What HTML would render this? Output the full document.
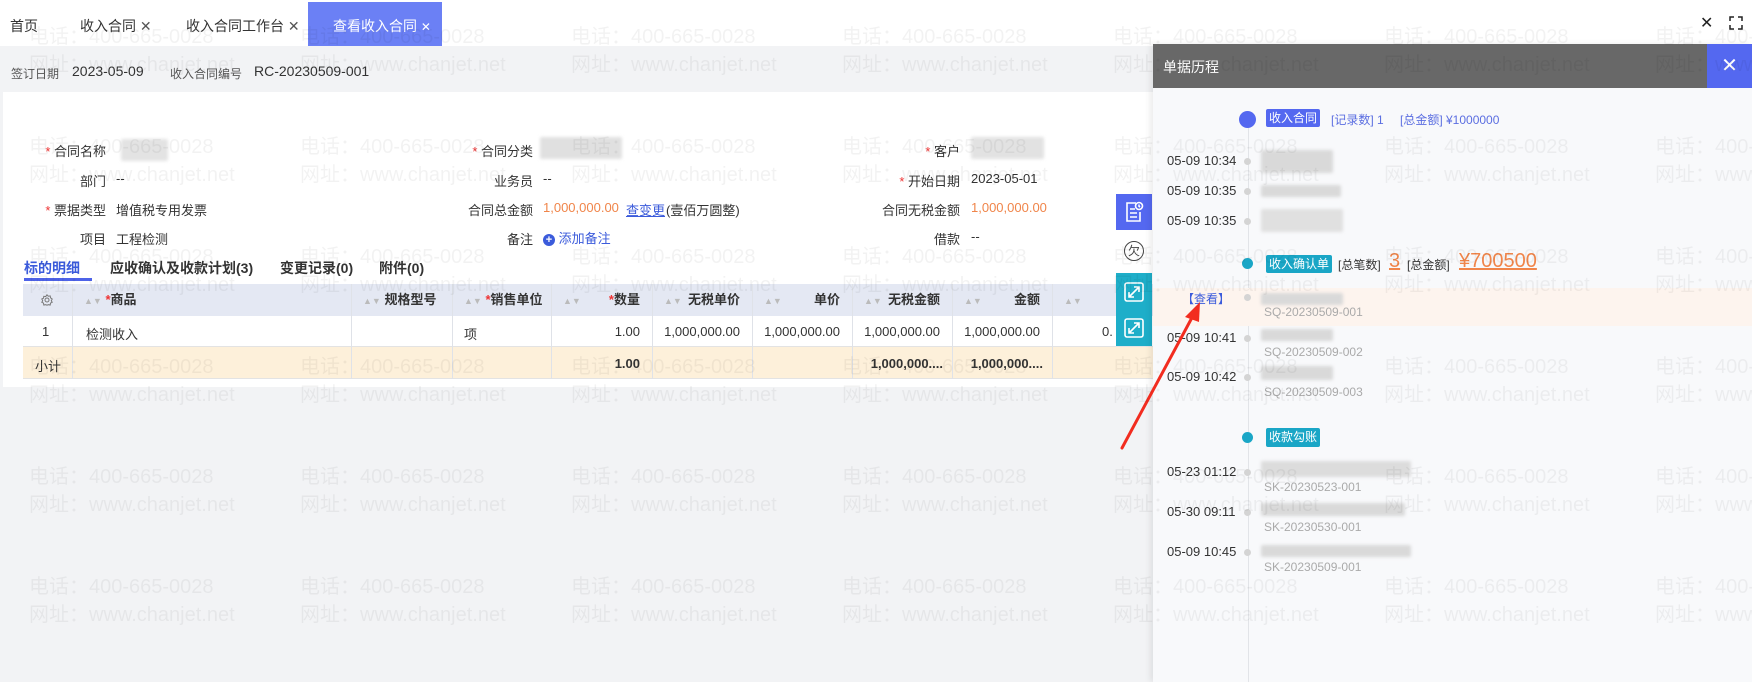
<!DOCTYPE html>
<html><head><meta charset="utf-8">
<style>
*{margin:0;padding:0;box-sizing:border-box}
body{width:1752px;height:682px;overflow:hidden;background:#f2f3f5;font-family:"Liberation Sans","Noto Sans CJK SC",sans-serif;font-size:13px;color:#333;position:relative}
.a{position:absolute;white-space:nowrap}
.blur{position:absolute;background:#d9d9d9;filter:blur(1.5px);border-radius:2px}
.wm{position:absolute;color:rgba(0,0,0,0.05);font-size:20px;white-space:nowrap;pointer-events:none;z-index:50}
.star{color:#e33}
.th{position:absolute;top:284px;height:32px;line-height:32px;font-weight:bold;font-size:13px;color:#333}
.sort{color:#bbb;font-size:9px;font-weight:normal}
.vl{position:absolute;width:1px;background:#dfe2e8}
.lbl{position:absolute;text-align:right;white-space:nowrap}
.time{position:absolute;left:1167px;font-size:13px;color:#333}
.dot{position:absolute;left:1244px;width:7px;height:7px;border-radius:50%;background:#d4d4d4}
.sq{position:absolute;left:1264px;color:#aaa;font-size:12px}
</style></head><body>

<div class="a" style="left:0;top:0;width:1752px;height:46px;background:#fff"></div>
<div class="a" style="left:10px;top:16px;font-size:14px">首页</div>
<div class="a" style="left:80px;top:16px;font-size:14px">收入合同 <span style="color:#555">✕</span></div>
<div class="a" style="left:186px;top:16px;font-size:14px">收入合同工作台 <span style="color:#555">✕</span></div>
<div class="a" style="left:308px;top:2px;width:134px;height:44px;background:#6b80f5"></div>
<div class="a" style="left:333px;top:16px;font-size:14px;color:#fff">查看收入合同 <span style="font-size:12px">✕</span></div>
<div class="a" style="left:1693px;top:2px;width:27px;height:42px;background:#fff"></div>
<div class="a" style="left:1723px;top:2px;width:29px;height:42px;background:#fff"></div>
<div class="a" style="left:1700px;top:13px;font-size:16px;color:#222">✕</div>
<svg class="a" style="left:1729px;top:16px" width="14" height="14" viewBox="0 0 14 14" fill="none" stroke="#222" stroke-width="1.5"><path d="M1 5V1h4M9 1h4v4M13 9v4H9M5 13H1V9"/></svg>

<div class="a" style="left:11px;top:65px;font-size:12px;color:#555">签订日期</div>
<div class="a" style="left:72px;top:63px;font-size:14px">2023-05-09</div>
<div class="a" style="left:170px;top:65px;font-size:12px;color:#555">收入合同编号</div>
<div class="a" style="left:254px;top:63px;font-size:14px">RC-20230509-001</div>

<div class="a" style="left:3px;top:92px;width:1150px;height:295px;background:#fff"></div>

<div class="lbl" style="left:40px;top:141px;width:66px"><span class="star">*</span> 合同名称</div>
<div class="blur" style="left:121px;top:139px;width:47px;height:22px;background:#e3e3e3"></div>
<div class="lbl" style="left:40px;top:171px;width:66px">部门</div><div class="a" style="left:116px;top:171px">--</div>
<div class="lbl" style="left:30px;top:200px;width:76px"><span class="star">*</span> 票据类型</div><div class="a" style="left:116px;top:200px">增值税专用发票</div>
<div class="lbl" style="left:40px;top:229px;width:66px">项目</div><div class="a" style="left:116px;top:229px">工程检测</div>

<div class="lbl" style="left:440px;top:141px;width:93px"><span class="star">*</span> 合同分类</div>
<div class="blur" style="left:540px;top:137px;width:82px;height:22px;background:#e0e0e0"></div>
<div class="lbl" style="left:440px;top:171px;width:93px">业务员</div><div class="a" style="left:543px;top:171px">--</div>
<div class="lbl" style="left:440px;top:200px;width:93px">合同总金额</div>
<div class="a" style="left:543px;top:200px;color:#f0854a">1,000,000.00</div>
<div class="a" style="left:626px;top:200px;color:#3b5bdb;text-decoration:underline">查变更</div>
<div class="a" style="left:666px;top:200px">(壹佰万圆整)</div>
<div class="lbl" style="left:440px;top:229px;width:93px">备注</div>
<div class="a" style="left:543px;top:228px;color:#3b5bdb"><span style="display:inline-block;width:12px;height:12px;border-radius:50%;background:#3b5bdb;color:#fff;font-size:11px;line-height:12px;text-align:center;font-weight:bold">+</span> 添加备注</div>

<div class="lbl" style="left:860px;top:141px;width:100px"><span class="star">*</span> 客户</div>
<div class="blur" style="left:971px;top:137px;width:73px;height:22px;background:#e2e2e2"></div>
<div class="lbl" style="left:860px;top:171px;width:100px"><span class="star">*</span> 开始日期</div><div class="a" style="left:971px;top:171px">2023-05-01</div>
<div class="lbl" style="left:860px;top:200px;width:100px">合同无税金额</div><div class="a" style="left:971px;top:200px;color:#f0854a">1,000,000.00</div>
<div class="lbl" style="left:860px;top:229px;width:100px">借款</div><div class="a" style="left:971px;top:229px">--</div>

<div class="a" style="left:24px;top:258px;font-size:14px;color:#3b5bdb;font-weight:bold">标的明细</div>
<div class="a" style="left:24px;top:278px;width:68px;height:3px;background:#4e63e8"></div>
<div class="a" style="left:110px;top:258px;font-size:14px;font-weight:bold">应收确认及收款计划(3)</div>
<div class="a" style="left:280px;top:258px;font-size:14px;font-weight:bold">变更记录(0)</div>
<div class="a" style="left:379px;top:258px;font-size:14px;font-weight:bold">附件(0)</div>

<div class="a" style="left:23px;top:284px;width:1130px;height:32px;background:#e4e8f3"></div>
<div class="a" style="left:23px;top:316px;width:1130px;height:31px;background:#fff;border-bottom:1px solid #e3e3e3"></div>
<div class="a" style="left:23px;top:347px;width:1130px;height:32px;background:#fdf0da;border-bottom:1px solid #e3e3e3"></div>
<div class="vl" style="left:72px;top:284px;height:95px"></div>
<div class="vl" style="left:351px;top:284px;height:95px"></div>
<div class="vl" style="left:452px;top:284px;height:95px"></div>
<div class="vl" style="left:551px;top:284px;height:95px"></div>
<div class="vl" style="left:652px;top:284px;height:95px"></div>
<div class="vl" style="left:752px;top:284px;height:95px"></div>
<div class="vl" style="left:852px;top:284px;height:95px"></div>
<div class="vl" style="left:952px;top:284px;height:95px"></div>
<div class="vl" style="left:1052px;top:284px;height:95px"></div>
<svg class="a" style="left:41px;top:294px" width="12" height="12" viewBox="0 0 12 12" fill="none" stroke="#777" stroke-width="1"><circle cx="6" cy="6" r="2"/><path d="M6 .8l1.3 1.4 1.9-.3.3 1.9L11.2 5 10.3 6.7l.9 1.6-1.7.8-.3 1.9-1.9-.3L6 11.2 4.7 10.7l-1.9.3-.3-1.9L.8 8.3 1.7 6.7.8 5l1.7-.8.3-1.9 1.9.3z"/></svg>
<div class="th" style="left:84px"><span class="sort">▲▼</span> <span class="star">*</span>商品</div>
<div class="th" style="left:363px"><span class="sort">▲▼</span> 规格型号</div>
<div class="th" style="left:464px"><span class="sort">▲▼</span> <span class="star">*</span>销售单位</div>
<div class="th" style="left:563px"><span class="sort">▲▼</span></div><div class="th" style="left:600px;width:40px;text-align:right"><span class="star">*</span>数量</div>
<div class="th" style="left:664px"><span class="sort">▲▼</span></div><div class="th" style="left:680px;width:60px;text-align:right">无税单价</div>
<div class="th" style="left:764px"><span class="sort">▲▼</span></div><div class="th" style="left:780px;width:60px;text-align:right">单价</div>
<div class="th" style="left:864px"><span class="sort">▲▼</span></div><div class="th" style="left:880px;width:60px;text-align:right">无税金额</div>
<div class="th" style="left:964px"><span class="sort">▲▼</span></div><div class="th" style="left:980px;width:60px;text-align:right">金额</div>
<div class="th" style="left:1064px"><span class="sort">▲▼</span></div>

<div class="a" style="left:42px;top:324px">1</div>
<div class="a" style="left:86px;top:324px">检测收入</div>
<div class="a" style="left:464px;top:324px">项</div>
<div class="a" style="left:560px;top:324px;width:80px;text-align:right">1.00</div>
<div class="a" style="left:655px;top:324px;width:85px;text-align:right">1,000,000.00</div>
<div class="a" style="left:755px;top:324px;width:85px;text-align:right">1,000,000.00</div>
<div class="a" style="left:855px;top:324px;width:85px;text-align:right">1,000,000.00</div>
<div class="a" style="left:955px;top:324px;width:85px;text-align:right">1,000,000.00</div>
<div class="a" style="left:1102px;top:324px">0.</div>
<div class="a" style="left:35px;top:356px">小计</div>
<div class="a" style="left:560px;top:356px;width:80px;text-align:right;font-weight:bold">1.00</div>
<div class="a" style="left:855px;top:356px;width:88px;text-align:right;font-weight:bold">1,000,000....</div>
<div class="a" style="left:955px;top:356px;width:88px;text-align:right;font-weight:bold">1,000,000....</div>

<div class="a" style="left:1116px;top:194px;width:36px;height:36px;background:#5468f0"></div>
<svg class="a" style="left:1124px;top:201px" width="20" height="22" viewBox="0 0 20 22" fill="none" stroke="#fff" stroke-width="1.6"><path d="M12 2H3v18h13V11"/><path d="M6 8h5M6 12h7M6 16h7"/><circle cx="15" cy="5" r="3.5"/><path d="M15 3.5v1.8l1 .8"/></svg>
<div class="a" style="left:1116px;top:233px;width:36px;height:36px;background:#fff"></div>
<div class="a" style="left:1124px;top:241px;width:20px;height:20px;border:1.3px solid #444;border-radius:50%;font-size:12px;line-height:18px;text-align:center;color:#444">欠</div>
<div class="a" style="left:1116px;top:273px;width:36px;height:73px;background:#1eaec9"></div>
<svg class="a" style="left:1124px;top:282px" width="20" height="20" viewBox="0 0 20 20" fill="none" stroke="#fff" stroke-width="1.6"><rect x="1" y="1" width="18" height="18" rx="2"/><path d="M5 15l10-10M10 5h5v5M5 10v5h5"/></svg>
<svg class="a" style="left:1124px;top:318px" width="20" height="20" viewBox="0 0 20 20" fill="none" stroke="#fff" stroke-width="1.6"><rect x="1" y="1" width="18" height="18" rx="2"/><path d="M5 15l10-10M10 5h5v5M5 10v5h5"/></svg>

<div class="a" style="left:1153px;top:44px;width:599px;height:638px;background:#f8f9fb;box-shadow:-3px 0 6px rgba(0,0,0,0.08)"></div>
<div class="a" style="left:1153px;top:44px;width:599px;height:44px;background:#686868"></div>
<div class="a" style="left:1163px;top:57px;font-size:14px;color:#fff">单据历程</div>
<div class="a" style="left:1707px;top:44px;width:45px;height:44px;background:#5468f0;color:#fff;font-size:20px;text-align:center;line-height:44px">✕</div>
<div class="a" style="left:1248px;top:115px;width:1px;height:567px;background:#e2e4e8"></div>
<div class="a" style="left:1153px;top:288px;width:599px;height:38px;background:#fdf4ee"></div>

<div class="a" style="left:1239px;top:111px;width:17px;height:17px;border-radius:50%;background:#5468f0"></div>
<div class="a" style="left:1266px;top:109px;width:54px;height:18px;background:#5468f0;color:#fff;font-size:12px;line-height:18px;text-align:center;border-radius:2px">收入合同</div>
<div class="a" style="left:1331px;top:111px;color:#5b6ee1;font-size:12px">[记录数] 1</div>
<div class="a" style="left:1400px;top:111px;color:#5b6ee1;font-size:12px">[总金额] ¥1000000</div>

<div class="time" style="top:153px">05-09 10:34</div><div class="dot" style="top:158px"></div>
<div class="blur" style="left:1261px;top:150px;width:72px;height:23px"></div>
<div class="time" style="top:183px">05-09 10:35</div><div class="dot" style="top:188px"></div>
<div class="blur" style="left:1261px;top:185px;width:80px;height:12px"></div>
<div class="time" style="top:213px">05-09 10:35</div><div class="dot" style="top:218px"></div>
<div class="blur" style="left:1261px;top:209px;width:82px;height:23px;background:#e0e0e0"></div>

<div class="a" style="left:1242px;top:258px;width:11px;height:11px;border-radius:50%;background:#1aa6c6"></div>
<div class="a" style="left:1266px;top:255px;width:66px;height:18px;background:#1aa6c6;color:#fff;font-size:12px;line-height:18px;text-align:center;border-radius:2px">收入确认单</div>
<div class="a" style="left:1338px;top:256px;font-size:12px">[总笔数]</div>
<div class="a" style="left:1389px;top:250px;font-size:20px;color:#f0854a;text-decoration:underline">3</div>
<div class="a" style="left:1407px;top:256px;font-size:12px">[总金额]</div>
<div class="a" style="left:1459px;top:250px;font-size:20px;color:#f0854a;text-decoration:underline">¥700500</div>

<div class="a" style="left:1182px;top:290px;color:#3b5bdb;font-size:12px">【查看】</div>
<div class="dot" style="top:294px"></div>
<div class="blur" style="left:1261px;top:293px;width:82px;height:12px"></div>
<div class="sq" style="top:305px">SQ-20230509-001</div>
<div class="time" style="top:330px">05-09 10:41</div><div class="dot" style="top:335px"></div>
<div class="blur" style="left:1261px;top:329px;width:72px;height:12px"></div>
<div class="sq" style="top:345px">SQ-20230509-002</div>
<div class="time" style="top:369px">05-09 10:42</div><div class="dot" style="top:374px"></div>
<div class="blur" style="left:1261px;top:366px;width:72px;height:14px"></div>
<div class="sq" style="top:385px">SQ-20230509-003</div>

<div class="a" style="left:1242px;top:432px;width:11px;height:11px;border-radius:50%;background:#1aa6c6"></div>
<div class="a" style="left:1266px;top:428px;width:54px;height:19px;background:#1aa6c6;color:#fff;font-size:12px;line-height:19px;text-align:center;border-radius:2px">收款勾账</div>

<div class="time" style="top:464px">05-23 01:12</div><div class="dot" style="top:469px"></div>
<div class="blur" style="left:1261px;top:461px;width:150px;height:16px;background:#dcdcdc"></div>
<div class="sq" style="top:480px">SK-20230523-001</div>
<div class="time" style="top:504px">05-30 09:11</div><div class="dot" style="top:509px"></div>
<div class="blur" style="left:1261px;top:503px;width:144px;height:13px"></div>
<div class="sq" style="top:520px">SK-20230530-001</div>
<div class="time" style="top:544px">05-09 10:45</div><div class="dot" style="top:549px"></div>
<div class="blur" style="left:1261px;top:545px;width:150px;height:12px"></div>
<div class="sq" style="top:560px">SK-20230509-001</div>

<svg class="a" style="left:1115px;top:295px;z-index:40" width="95" height="160" viewBox="0 0 95 160"><path d="M7 153L80 17" stroke="#f22c1f" stroke-width="3" stroke-linecap="round"/><path d="M85 7L70 22L84 27Z" fill="#f22c1f"/></svg>

<div class="wm" style="left:29px;top:20px">电话：400-665-0028</div><div class="wm" style="left:29px;top:48px">网址：www.chanjet.net</div>
<div class="wm" style="left:300px;top:20px">电话：400-665-0028</div><div class="wm" style="left:300px;top:48px">网址：www.chanjet.net</div>
<div class="wm" style="left:571px;top:20px">电话：400-665-0028</div><div class="wm" style="left:571px;top:48px">网址：www.chanjet.net</div>
<div class="wm" style="left:842px;top:20px">电话：400-665-0028</div><div class="wm" style="left:842px;top:48px">网址：www.chanjet.net</div>
<div class="wm" style="left:1113px;top:20px">电话：400-665-0028</div><div class="wm" style="left:1113px;top:48px">网址：www.chanjet.net</div>
<div class="wm" style="left:1384px;top:20px">电话：400-665-0028</div><div class="wm" style="left:1384px;top:48px">网址：www.chanjet.net</div>
<div class="wm" style="left:1655px;top:20px">电话：400-665-0028</div><div class="wm" style="left:1655px;top:48px">网址：www.chanjet.net</div>

<div class="wm" style="left:29px;top:130px">电话：400-665-0028</div><div class="wm" style="left:29px;top:158px">网址：www.chanjet.net</div>
<div class="wm" style="left:300px;top:130px">电话：400-665-0028</div><div class="wm" style="left:300px;top:158px">网址：www.chanjet.net</div>
<div class="wm" style="left:571px;top:130px">电话：400-665-0028</div><div class="wm" style="left:571px;top:158px">网址：www.chanjet.net</div>
<div class="wm" style="left:842px;top:130px">电话：400-665-0028</div><div class="wm" style="left:842px;top:158px">网址：www.chanjet.net</div>
<div class="wm" style="left:1113px;top:130px">电话：400-665-0028</div><div class="wm" style="left:1113px;top:158px">网址：www.chanjet.net</div>
<div class="wm" style="left:1384px;top:130px">电话：400-665-0028</div><div class="wm" style="left:1384px;top:158px">网址：www.chanjet.net</div>
<div class="wm" style="left:1655px;top:130px">电话：400-665-0028</div><div class="wm" style="left:1655px;top:158px">网址：www.chanjet.net</div>

<div class="wm" style="left:29px;top:240px">电话：400-665-0028</div><div class="wm" style="left:29px;top:268px">网址：www.chanjet.net</div>
<div class="wm" style="left:300px;top:240px">电话：400-665-0028</div><div class="wm" style="left:300px;top:268px">网址：www.chanjet.net</div>
<div class="wm" style="left:571px;top:240px">电话：400-665-0028</div><div class="wm" style="left:571px;top:268px">网址：www.chanjet.net</div>
<div class="wm" style="left:842px;top:240px">电话：400-665-0028</div><div class="wm" style="left:842px;top:268px">网址：www.chanjet.net</div>
<div class="wm" style="left:1113px;top:240px">电话：400-665-0028</div><div class="wm" style="left:1113px;top:268px">网址：www.chanjet.net</div>
<div class="wm" style="left:1384px;top:240px">电话：400-665-0028</div><div class="wm" style="left:1384px;top:268px">网址：www.chanjet.net</div>
<div class="wm" style="left:1655px;top:240px">电话：400-665-0028</div><div class="wm" style="left:1655px;top:268px">网址：www.chanjet.net</div>

<div class="wm" style="left:29px;top:350px">电话：400-665-0028</div><div class="wm" style="left:29px;top:378px">网址：www.chanjet.net</div>
<div class="wm" style="left:300px;top:350px">电话：400-665-0028</div><div class="wm" style="left:300px;top:378px">网址：www.chanjet.net</div>
<div class="wm" style="left:571px;top:350px">电话：400-665-0028</div><div class="wm" style="left:571px;top:378px">网址：www.chanjet.net</div>
<div class="wm" style="left:842px;top:350px">电话：400-665-0028</div><div class="wm" style="left:842px;top:378px">网址：www.chanjet.net</div>
<div class="wm" style="left:1113px;top:350px">电话：400-665-0028</div><div class="wm" style="left:1113px;top:378px">网址：www.chanjet.net</div>
<div class="wm" style="left:1384px;top:350px">电话：400-665-0028</div><div class="wm" style="left:1384px;top:378px">网址：www.chanjet.net</div>
<div class="wm" style="left:1655px;top:350px">电话：400-665-0028</div><div class="wm" style="left:1655px;top:378px">网址：www.chanjet.net</div>

<div class="wm" style="left:29px;top:460px">电话：400-665-0028</div><div class="wm" style="left:29px;top:488px">网址：www.chanjet.net</div>
<div class="wm" style="left:300px;top:460px">电话：400-665-0028</div><div class="wm" style="left:300px;top:488px">网址：www.chanjet.net</div>
<div class="wm" style="left:571px;top:460px">电话：400-665-0028</div><div class="wm" style="left:571px;top:488px">网址：www.chanjet.net</div>
<div class="wm" style="left:842px;top:460px">电话：400-665-0028</div><div class="wm" style="left:842px;top:488px">网址：www.chanjet.net</div>
<div class="wm" style="left:1113px;top:460px">电话：400-665-0028</div><div class="wm" style="left:1113px;top:488px">网址：www.chanjet.net</div>
<div class="wm" style="left:1384px;top:460px">电话：400-665-0028</div><div class="wm" style="left:1384px;top:488px">网址：www.chanjet.net</div>
<div class="wm" style="left:1655px;top:460px">电话：400-665-0028</div><div class="wm" style="left:1655px;top:488px">网址：www.chanjet.net</div>

<div class="wm" style="left:29px;top:570px">电话：400-665-0028</div><div class="wm" style="left:29px;top:598px">网址：www.chanjet.net</div>
<div class="wm" style="left:300px;top:570px">电话：400-665-0028</div><div class="wm" style="left:300px;top:598px">网址：www.chanjet.net</div>
<div class="wm" style="left:571px;top:570px">电话：400-665-0028</div><div class="wm" style="left:571px;top:598px">网址：www.chanjet.net</div>
<div class="wm" style="left:842px;top:570px">电话：400-665-0028</div><div class="wm" style="left:842px;top:598px">网址：www.chanjet.net</div>
<div class="wm" style="left:1113px;top:570px">电话：400-665-0028</div><div class="wm" style="left:1113px;top:598px">网址：www.chanjet.net</div>
<div class="wm" style="left:1384px;top:570px">电话：400-665-0028</div><div class="wm" style="left:1384px;top:598px">网址：www.chanjet.net</div>
<div class="wm" style="left:1655px;top:570px">电话：400-665-0028</div><div class="wm" style="left:1655px;top:598px">网址：www.chanjet.net</div>
</body></html>
